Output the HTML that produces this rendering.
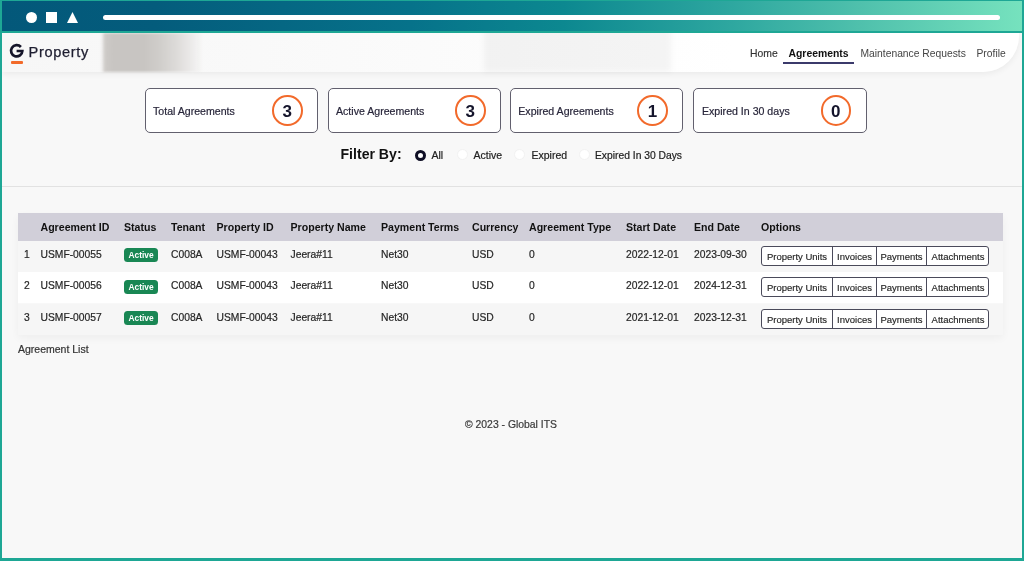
<!DOCTYPE html>
<html><head><meta charset="utf-8">
<style>
*{margin:0;padding:0;box-sizing:border-box}
html,body{width:1024px;height:576px;overflow:hidden;background:#fff;-webkit-font-smoothing:antialiased;font-family:"Liberation Sans",sans-serif;color:#212529}
.a{position:absolute;white-space:nowrap}
#frame{position:absolute;left:0;top:0;width:1024px;height:560.5px;background:#1ea795}
#content{position:absolute;left:2px;top:33px;width:1019.5px;height:524.5px;background:#f8f8f8;overflow:hidden;will-change:transform}
#bar{position:absolute;left:2px;top:1px;width:1020px;height:29.5px;background:linear-gradient(90deg,#03587a 0%,#045c7c 15%,#06728a 40%,#0c8890 55%,#2fa8a0 72%,#4fc0ac 84%,#76e2be 100%)}
#nav{position:absolute;left:0;top:0;width:1017px;height:39px;background:linear-gradient(90deg,#f7f7f7 0%,#f9f9f9 25%,#fcfcfc 50%,#fff 72%);border-bottom-right-radius:36px;box-shadow:0 2px 6px rgba(0,0,0,.06)}
.card{position:absolute;top:54.8px;width:173.5px;height:45.4px;border:1.5px solid #62606e;border-radius:5px;background:#fff}
.card .t{position:absolute;left:7.5px;top:16.1px;font-size:10.6px;color:#28263a;-webkit-text-stroke:.2px #28263a}
.card .c{position:absolute;right:14.5px;top:6.3px;width:30.5px;height:30.5px;border:2px solid #f26a2b;border-radius:50%;text-align:center;font-weight:700;font-size:17px;line-height:29.5px;color:#14142b}
.th{position:absolute;top:188px;font-weight:700;font-size:10.6px;color:#111}
.td{position:absolute;font-size:10.3px;color:#262626;-webkit-text-stroke:.2px #262626}
.badge{position:absolute;width:34px;height:14px;background:#198754;border-radius:3.5px;color:#fff;font-weight:700;font-size:8.4px;text-align:center;line-height:15px}
.grp{position:absolute;left:759px;width:228px;height:20px;border:1px solid #4a4a5a;border-radius:3px;background:#fff}
.grp span{position:absolute;top:0;height:18px;line-height:19.5px;font-size:9.5px;color:#262626;text-align:center;-webkit-text-stroke:.15px #262626}
.grp i{position:absolute;top:0;width:1px;height:18px;background:#4a4a5a}
</style></head><body>
<div id="frame"></div>
<div id="bar">
  <div class="a" style="left:24px;top:11px;width:11px;height:11px;border-radius:50%;background:#fff"></div>
  <div class="a" style="left:44px;top:11px;width:11px;height:11px;background:#fff"></div>
  <svg class="a" style="left:65px;top:11px" width="11" height="11" viewBox="0 0 11 11"><path d="M5.5 0 L11 11 L0 11 Z" fill="#fff"/></svg>
  <div class="a" style="left:101px;top:13.5px;width:897px;height:5.5px;border-radius:3px;background:#fff"></div>
</div>
<div id="content">
  <div id="nav"></div>
  <!-- blurred block -->
  <div class="a" style="left:99px;top:0;width:102px;height:39px;background:linear-gradient(90deg,rgba(205,202,199,0) 0%,#cdcac7 4%,#c8c5c2 12%,#c8c5c2 42%,#d0cecb 58%,#dddbd9 74%,#ebeae9 88%,rgba(245,245,245,0) 100%);filter:blur(1px)"></div>
  <div class="a" style="left:482px;top:-5px;width:187px;height:44px;background:rgba(0,0,0,.04);filter:blur(3px)"></div>
  <!-- logo -->
  <svg class="a" style="left:0;top:0" width="40" height="40" viewBox="2 33 40 40"><path d="M20.9 47 A5.65 5.65 0 1 0 22.35 51 L16.6 51" fill="none" stroke="#15152a" stroke-width="2.7"/></svg>
  <div class="a" style="left:9px;top:28.2px;width:12px;height:2.6px;border-radius:1px;background:#f26a2a"></div>
  <div class="a" style="left:26.5px;top:11.2px;font-size:14.6px;letter-spacing:.65px;color:#1e1e30;-webkit-text-stroke:.25px #1e1e30">Property</div>
  <!-- nav links -->
  <div class="a" style="left:748px;top:15.3px;font-size:10.4px;color:#333;-webkit-text-stroke:.15px #333">Home</div>
  <div class="a" style="left:786.5px;top:15px;font-size:10.4px;font-weight:700;color:#111">Agreements</div>
  <div class="a" style="left:781px;top:28.5px;width:71px;height:2px;background:#3b3a6b"></div>
  <div class="a" style="left:858.5px;top:15.3px;font-size:10.3px;color:#444">Maintenance Requests</div>
  <div class="a" style="left:974.5px;top:15.3px;font-size:10.3px;color:#444">Profile</div>

  <!-- cards -->
  <div class="card" style="left:142.5px"><div class="t">Total Agreements</div><div class="c">3</div></div>
  <div class="card" style="left:325.5px"><div class="t">Active Agreements</div><div class="c">3</div></div>
  <div class="card" style="left:507.8px"><div class="t">Expired Agreements</div><div class="c">1</div></div>
  <div class="card" style="left:691px"><div class="t" style="left:8px">Expired In 30 days</div><div class="c">0</div></div>

  <!-- filter -->
  <div class="a" style="left:338.5px;top:113px;font-size:14.1px;font-weight:700;color:#111">Filter By:</div>
  <div class="a" style="left:412.8px;top:116.5px;width:11px;height:11px;border-radius:50%;border:3px solid #0f0f25;background:#fff"></div>
  <div class="a" style="left:429.5px;top:116px;font-size:10.5px;color:#222;-webkit-text-stroke:.2px #222">All</div>
  <div class="a" style="left:455px;top:116.3px;width:11px;height:11px;border-radius:50%;background:#fff;border:1px solid #f2f2f2"></div>
  <div class="a" style="left:471.5px;top:116px;font-size:10.5px;color:#222;-webkit-text-stroke:.2px #222">Active</div>
  <div class="a" style="left:512px;top:116.3px;width:11px;height:11px;border-radius:50%;background:#fff;border:1px solid #f2f2f2"></div>
  <div class="a" style="left:529.5px;top:116px;font-size:10.5px;color:#222;-webkit-text-stroke:.2px #222">Expired</div>
  <div class="a" style="left:577px;top:116.3px;width:11px;height:11px;border-radius:50%;background:#fff;border:1px solid #f2f2f2"></div>
  <div class="a" style="left:593px;top:116.8px;font-size:10.3px;color:#222;-webkit-text-stroke:.2px #222">Expired In 30 Days</div>

  <!-- hr -->
  <div class="a" style="left:0;top:152.5px;width:1020px;height:1px;background:#e2e2e2"></div>

  <!-- table -->
  <div class="a" style="left:16px;top:180px;width:985px;height:122px;box-shadow:0 3px 8px rgba(0,0,0,.045)"></div>
  <div class="a" style="left:16px;top:180px;width:985px;height:27.5px;background:#d1cfd9"></div>
  <div class="a" style="left:16px;top:207.5px;width:985px;height:31.5px;background:#f6f6f6"></div>
  <div class="a" style="left:16px;top:239px;width:985px;height:31px;background:#fff"></div>
  <div class="a" style="left:16px;top:270.5px;width:985px;height:31.5px;background:#f6f6f6"></div>

  <div class="th" style="left:38.5px">Agreement ID</div>
  <div class="th" style="left:122px">Status</div>
  <div class="th" style="left:169px">Tenant</div>
  <div class="th" style="left:214.5px">Property ID</div>
  <div class="th" style="left:288.5px">Property Name</div>
  <div class="th" style="left:379px">Payment Terms</div>
  <div class="th" style="left:470px">Currency</div>
  <div class="th" style="left:527px">Agreement Type</div>
  <div class="th" style="left:624px">Start Date</div>
  <div class="th" style="left:692px">End Date</div>
  <div class="th" style="left:759px">Options</div>

  <div class="td" style="left:22px;top:215.8px">1</div>
<div class="td" style="left:38.5px;top:215.8px">USMF-00055</div>
<div class="badge" style="left:122px;top:215.0px">Active</div>
<div class="td" style="left:169px;top:215.8px">C008A</div>
<div class="td" style="left:214.5px;top:215.8px">USMF-00043</div>
<div class="td" style="left:288.5px;top:215.8px">Jeera#11</div>
<div class="td" style="left:379px;top:215.8px">Net30</div>
<div class="td" style="left:470px;top:215.8px">USD</div>
<div class="td" style="left:527px;top:215.8px">0</div>
<div class="td" style="left:624px;top:215.8px">2022-12-01</div>
<div class="td" style="left:692px;top:215.8px">2023-09-30</div>
<div class="grp" style="top:212.5px"><span style="left:0;width:70px">Property Units</span><i style="left:70px"></i><span style="left:71px;width:43px">Invoices</span><i style="left:114px"></i><span style="left:115px;width:49px">Payments</span><i style="left:164px"></i><span style="left:165px;width:62px">Attachments</span></div>
<div class="td" style="left:22px;top:247.3px">2</div>
<div class="td" style="left:38.5px;top:247.3px">USMF-00056</div>
<div class="badge" style="left:122px;top:246.5px">Active</div>
<div class="td" style="left:169px;top:247.3px">C008A</div>
<div class="td" style="left:214.5px;top:247.3px">USMF-00043</div>
<div class="td" style="left:288.5px;top:247.3px">Jeera#11</div>
<div class="td" style="left:379px;top:247.3px">Net30</div>
<div class="td" style="left:470px;top:247.3px">USD</div>
<div class="td" style="left:527px;top:247.3px">0</div>
<div class="td" style="left:624px;top:247.3px">2022-12-01</div>
<div class="td" style="left:692px;top:247.3px">2024-12-31</div>
<div class="grp" style="top:244.0px"><span style="left:0;width:70px">Property Units</span><i style="left:70px"></i><span style="left:71px;width:43px">Invoices</span><i style="left:114px"></i><span style="left:115px;width:49px">Payments</span><i style="left:164px"></i><span style="left:165px;width:62px">Attachments</span></div>
<div class="td" style="left:22px;top:278.8px">3</div>
<div class="td" style="left:38.5px;top:278.8px">USMF-00057</div>
<div class="badge" style="left:122px;top:278.0px">Active</div>
<div class="td" style="left:169px;top:278.8px">C008A</div>
<div class="td" style="left:214.5px;top:278.8px">USMF-00043</div>
<div class="td" style="left:288.5px;top:278.8px">Jeera#11</div>
<div class="td" style="left:379px;top:278.8px">Net30</div>
<div class="td" style="left:470px;top:278.8px">USD</div>
<div class="td" style="left:527px;top:278.8px">0</div>
<div class="td" style="left:624px;top:278.8px">2021-12-01</div>
<div class="td" style="left:692px;top:278.8px">2023-12-31</div>
<div class="grp" style="top:275.5px"><span style="left:0;width:70px">Property Units</span><i style="left:70px"></i><span style="left:71px;width:43px">Invoices</span><i style="left:114px"></i><span style="left:115px;width:49px">Payments</span><i style="left:164px"></i><span style="left:165px;width:62px">Attachments</span></div>


  <div class="a" style="left:16px;top:310px;font-size:10.5px;color:#333;-webkit-text-stroke:.2px #333">Agreement List</div>
  <div class="a" style="left:463px;top:385.8px;font-size:10.4px;color:#3a3a3a;-webkit-text-stroke:.2px #3a3a3a">© 2023 - Global ITS</div>
</div>

</body></html>
